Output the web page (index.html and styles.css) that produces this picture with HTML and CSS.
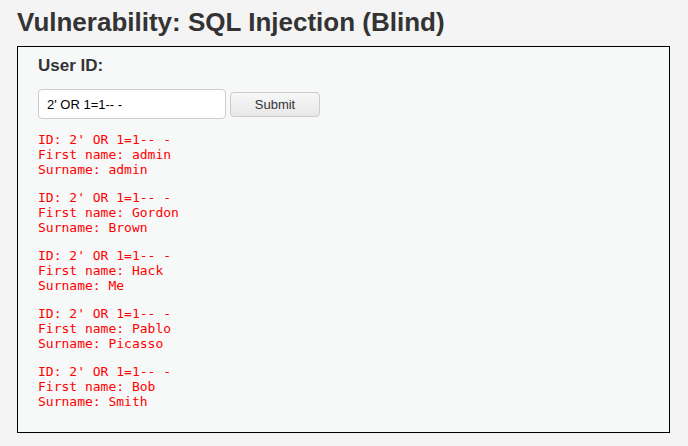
FILE: index.html
```html
<!DOCTYPE html>
<html>
<head>
<meta charset="utf-8">
<link rel="stylesheet" href="styles.css">
</head>
<body>
<div class="page">
  <h1 class="title">Vulnerability: SQL Injection (Blind)</h1>
  <div class="vuln">
    <form class="form">
      <p class="label">User ID:</p>
      <div class="row">
        <input class="input" type="text" value="2' OR 1=1-- -">
        <button class="btn" type="button">Submit</button>
      </div>
    </form>
    <pre class="out">ID: 2' OR 1=1-- -
First name: admin
Surname: admin</pre>
    <pre class="out">ID: 2' OR 1=1-- -
First name: Gordon
Surname: Brown</pre>
    <pre class="out">ID: 2' OR 1=1-- -
First name: Hack
Surname: Me</pre>
    <pre class="out">ID: 2' OR 1=1-- -
First name: Pablo
Surname: Picasso</pre>
    <pre class="out">ID: 2' OR 1=1-- -
First name: Bob
Surname: Smith</pre>
  </div>
</div>
</body>
</html>
```

FILE: styles.css
```css
html, body {
  margin: 0;
  padding: 0;
  background: #f4f4f4;
}
body {
  font-family: "Liberation Sans", Arial, sans-serif;
  color: #333;
}
.page {
  padding: 0 18px 0 17px;
}
.title {
  margin: 0;
  padding-top: 5px;
  font-size: 26px;
  line-height: 34px;
  font-weight: bold;
  color: #333;
  height: 41px;
}
.vuln {
  border: 1px solid #000;
  background: #f7f8f8;
  padding: 0 20px 10px 20px;
  box-sizing: border-box;
  height: 387px;
}
.form {
  margin: 0;
}
.label {
  margin: 0;
  padding-top: 9px;
  font-size: 17px;
  line-height: 20px;
  font-weight: bold;
  color: #333;
}
.row {
  display: flex;
  align-items: center;
  gap: 4px;
  margin-top: 13px;
}
.input {
  width: 188px;
  height: 30px;
  box-sizing: border-box;
  border: 1px solid #ccc;
  border-radius: 4px;
  background: #fff;
  padding: 0 8px;
  font-family: "Liberation Sans", Arial, sans-serif;
  font-size: 13px;
  color: #000;
}
.btn {
  width: 90px;
  height: 25px;
  box-sizing: border-box;
  border: 1px solid #ccc;
  border-radius: 4px;
  background: linear-gradient(#f7f7f7, #e8e8e8);
  font-family: "Liberation Sans", Arial, sans-serif;
  font-size: 13px;
  color: #333;
  padding: 0;
}
.out {
  margin: 13px 0 0 0;
  font-family: "DejaVu Sans Mono", monospace;
  font-size: 13px;
  line-height: 15px;
  color: #f00;
}
.out:first-of-type {
  margin-top: 13px;
}
```
